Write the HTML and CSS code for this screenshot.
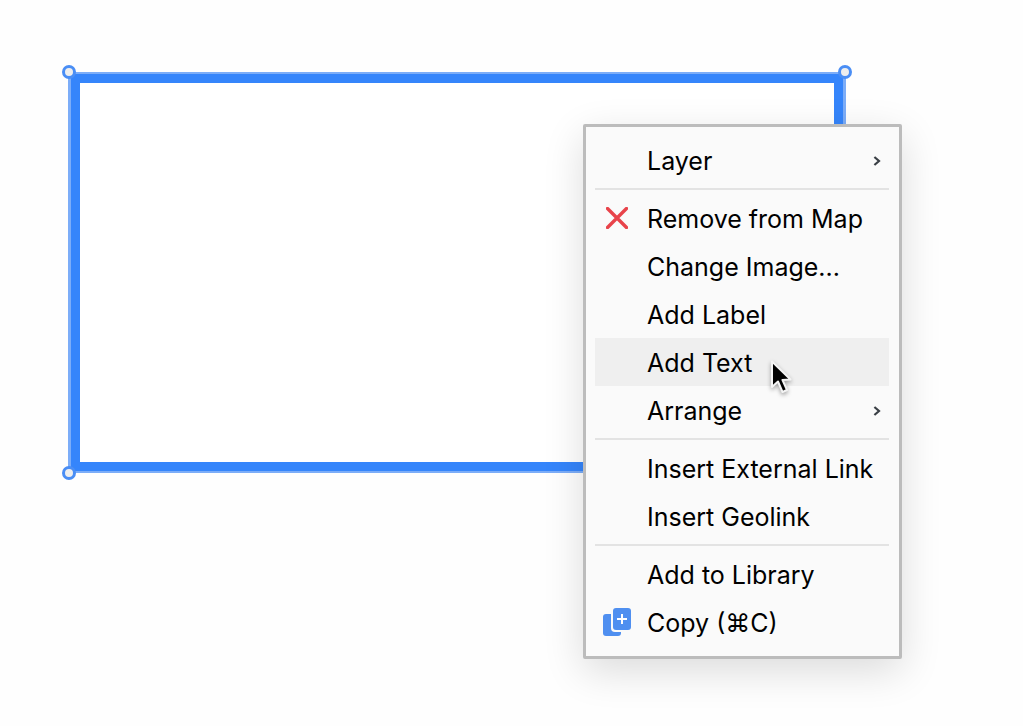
FILE: index.html
```html
<!DOCTYPE html>
<html lang="en">
<head>
    <meta charset="UTF-8">
    <title>Map object context menu</title>
    <link rel="stylesheet" href="styles.css">
</head>
<body>

<div class="canvas">
    <div class="frame"><div class="frame-inner"></div></div>
    <span class="handle handle-tl"></span>
    <span class="handle handle-tr"></span>
    <span class="handle handle-bl"></span>

    <div class="menu">
        <div class="row">Layer
            <svg class="chevron" viewBox="0 0 8 10"><path d="M1.4 1 L6 5 L1.4 9"/></svg>
        </div>
        <div class="sep"></div>
        <div class="row">
            <svg class="icon icon-remove" viewBox="0 0 22 22"><path d="M1.5 1.5 L20.5 20.5 M20.5 1.5 L1.5 20.5"/></svg>
            Remove from Map
        </div>
        <div class="row">Change Image...</div>
        <div class="row">Add Label</div>
        <div class="row row-hover">Add Text</div>
        <div class="row">Arrange
            <svg class="chevron" viewBox="0 0 8 10"><path d="M1.4 1 L6 5 L1.4 9"/></svg>
        </div>
        <div class="sep"></div>
        <div class="row">Insert External Link</div>
        <div class="row">Insert Geolink</div>
        <div class="sep"></div>
        <div class="row">Add to Library</div>
        <div class="row">
            <svg class="icon icon-copy" viewBox="0 0 28 28">
                <rect x="0" y="6" width="18" height="22" rx="3" fill="#4f8ff0"/>
                <rect x="8" y="-1" width="21" height="25" rx="4" fill="#fafafa"/>
                <rect x="10" y="0" width="18" height="22" rx="3" fill="#4f8ff0"/>
                <path d="M19 6 V16 M14 11 H24" stroke="#fff" stroke-width="2" fill="none"/>
            </svg>
            Copy (⌘C)
        </div>
    </div>

    <svg class="cursor" viewBox="0 0 26 40">
        <path d="M3 1.5 L3 27 L9 21.5 L13.5 32 L18 30 L13.5 20 L21.5 19.5 Z" fill="#000" stroke="#f4f4f4" stroke-width="2" stroke-linejoin="round"/>
    </svg>
</div>

</body>
</html>
```

FILE: styles.css
```css
body {
    font-family: Inter, "Liberation Sans", sans-serif;
    background-color: #fefefe;
    color: #000;
    margin: 0;
    padding: 0;
}
.canvas {
    position: relative;
    width: 1023px;
    height: 726px;
    overflow: hidden;
}
.frame {
    position: absolute;
    left: 68px;
    top: 72px;
    width: 778px;
    height: 401px;
    box-sizing: border-box;
    display: flex;
    border: solid #7cadf8;
    border-width: 2px 3px;
}
.frame-inner {
    flex: 1;
    border: 9px solid #3585fb;
    background-color: #fff;
}
.handle {
    position: absolute;
    width: 8px;
    height: 8px;
    border: 3px solid #4a8ef5;
    border-radius: 50%;
    background-color: #eeeeee;
}
.handle-tl { left: 62px; top: 65px; }
.handle-tr { left: 838px; top: 65px; }
.handle-bl { left: 62px; top: 466px; }

.menu {
    position: absolute;
    left: 583px;
    top: 124px;
    width: 319px;
    height: 535px;
    box-sizing: border-box;
    padding: 10px 10px 9px 9px;
    background-color: #fafafa;
    border: 3px solid #bcbcbc;
    border-radius: 2px;
    box-shadow: 0 12px 40px rgba(0, 0, 0, 0.14);
}
.row {
    position: relative;
    height: 48px;
    line-height: 48px;
    padding-left: 52px;
    font-size: 25px;
    white-space: nowrap;
}
.row-hover {
    margin: -1px 0 1px;
    line-height: 50px;
    background-color: #efefef;
}
.sep {
    height: 2px;
    margin: 3px 0 5px;
    background-color: #e3e3e3;
}
.icon {
    position: absolute;
    left: 11px;
    top: 12px;
    width: 22px;
    height: 22px;
}
.icon-remove path {
    stroke: #e8434a;
    stroke-width: 3.4;
    stroke-linecap: round;
    fill: none;
}
.icon-copy {
    left: 8px;
    top: 9px;
    width: 28px;
    height: 28px;
    overflow: visible;
}
.chevron {
    position: absolute;
    right: 8px;
    top: 19px;
    width: 8px;
    height: 10px;
}
.chevron path {
    fill: none;
    stroke: #3a3f45;
    stroke-width: 2.2;
}
.cursor {
    position: absolute;
    left: 769px;
    top: 360px;
    width: 26px;
    height: 40px;
    filter: drop-shadow(0 2px 2px rgba(0, 0, 0, 0.35));
}
```
